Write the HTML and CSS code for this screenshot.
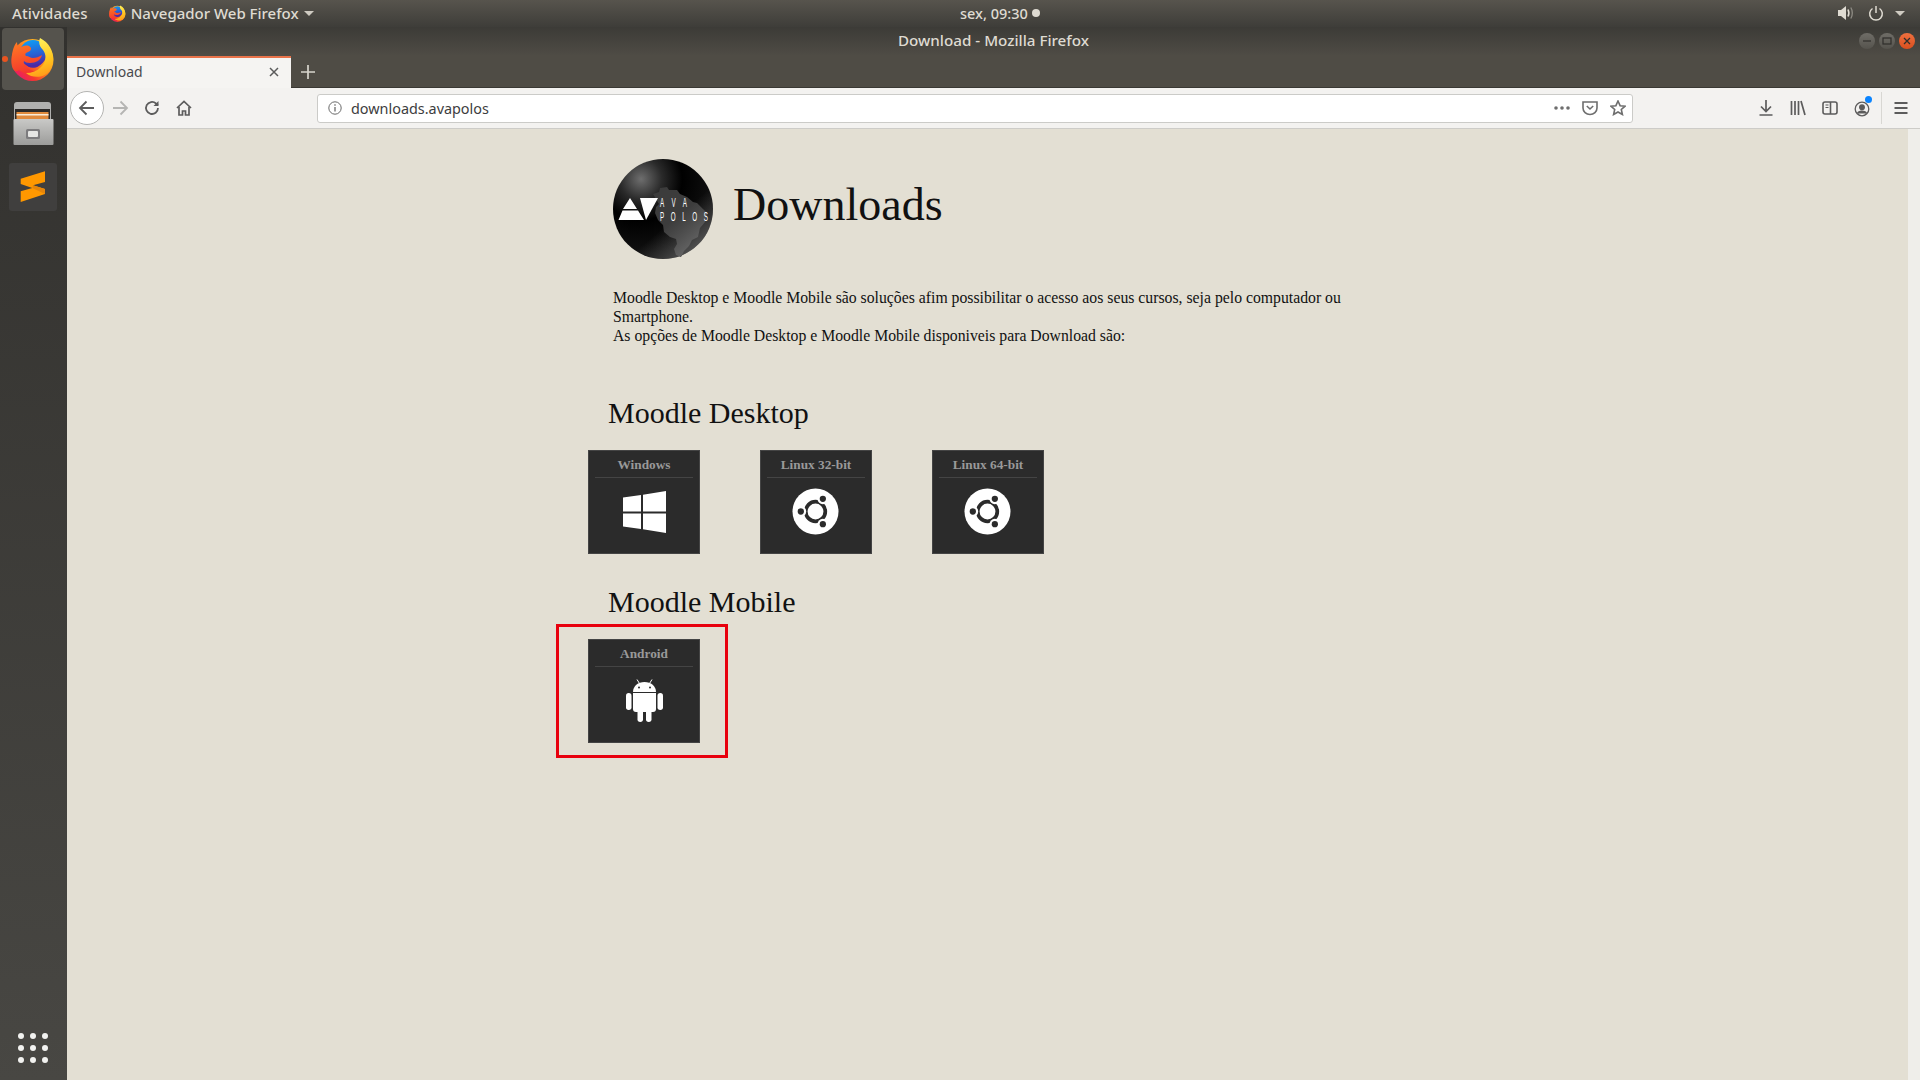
FILE: index.html
```html
<!DOCTYPE html>
<html lang="pt-BR">
<head>
    <meta charset="UTF-8">
    <meta name="viewport" content="width=device-width, initial-scale=1.0">
    <title>Download</title>
    <link rel="stylesheet" href="styles.css">
</head>
<body>
    <svg class="defs" width="0" height="0" aria-hidden="true">
        <defs>
            <linearGradient id="ffBase" x1="0.9" y1="0.2" x2="0.1" y2="0.9">
                <stop offset="0" stop-color="#ffc928"/>
                <stop offset="0.4" stop-color="#ff8a1c"/>
                <stop offset="0.72" stop-color="#f5372f"/>
                <stop offset="1" stop-color="#e8186e"/>
            </linearGradient>
            <linearGradient id="ffGlobe" x1="0.4" y1="0" x2="0.6" y2="1">
                <stop offset="0" stop-color="#0f9cf5"/>
                <stop offset="0.55" stop-color="#2a5fd2"/>
                <stop offset="1" stop-color="#54209c"/>
            </linearGradient>
            <linearGradient id="ffFlame" x1="0.4" y1="0" x2="0.6" y2="1">
                <stop offset="0" stop-color="#fff35e"/>
                <stop offset="0.6" stop-color="#ffc61f"/>
                <stop offset="1" stop-color="#ff9a1a"/>
            </linearGradient>
            <linearGradient id="ffHead" x1="0.2" y1="0" x2="0.5" y2="1">
                <stop offset="0" stop-color="#ff7a22"/>
                <stop offset="1" stop-color="#f4342e"/>
            </linearGradient>
            <symbol id="firefox" viewBox="0 0 44 44">
                <circle cx="21.500" cy="23" r="21" fill="url(#ffBase)"/>
                <circle cx="22" cy="16.500" r="13.500" fill="url(#ffGlobe)"/>
                <path d="M.5 23C1 14 3 8 6 5c0 3 1 5 3 6 2-2 6-3 9-2 2 1 3 3 1 5l-4 2c-1 1-1 2 0 3 3 0 4 2 7 2 3 0 6-1 9-3-1 5-6 8-12 8-3 0-5-1-6-2-1 3 1 6 5 8 3 2 7 3 11 2-6 4-15 4-21-1C3 37 0 30 .5 23z" fill="url(#ffHead)"/>
                <path d="M14 26c5 4 12 3 17-1-2 6-13 9-17 1z" fill="#4a2aa8"/>
                <path d="M29 1c-2 5 0 9 3 12 4 5 3 13-2 17-4 4-9 6-15 6 7 6 19 5 24-3C45 24 43 8 29 1z" fill="url(#ffFlame)"/>
            </symbol>
            <linearGradient id="fileBody" x1="0" y1="0" x2="0" y2="1">
                <stop offset="0" stop-color="#c9c9c7"/>
                <stop offset="1" stop-color="#9c9c9a"/>
            </linearGradient>
            <radialGradient id="logoShine" cx="0.28" cy="0.2" r="0.75">
                <stop offset="0" stop-color="#6e6e6e"/>
                <stop offset="0.28" stop-color="#2a2a2a"/>
                <stop offset="0.55" stop-color="#000"/>
                <stop offset="1" stop-color="#111"/>
            </radialGradient>
            <linearGradient id="logoEdge" x1="0.3" y1="0.3" x2="0.85" y2="0.95">
                <stop offset="0.5" stop-color="#888" stop-opacity="0"/>
                <stop offset="1" stop-color="#999" stop-opacity="0.55"/>
            </linearGradient>
            <symbol id="ubuntu" viewBox="0 0 48 48">
                <circle cx="24" cy="24" r="23.500" fill="#fff"/>
                <circle cx="24" cy="24" r="10" fill="none" stroke="#2b2b2b" stroke-width="3.800"/>
                <g fill="#fff">
                    <circle cx="9" cy="24" r="5.500"/>
                    <circle cx="31.500" cy="11" r="5.500"/>
                    <circle cx="31.500" cy="37" r="5.500"/>
                </g>
                <g fill="#2b2b2b">
                    <circle cx="9" cy="24" r="3.200"/>
                    <circle cx="31.500" cy="11" r="3.200"/>
                    <circle cx="31.500" cy="37" r="3.200"/>
                </g>
            </symbol>
        </defs>
    </svg>

    <header class="topbar">
        <div class="topbar-left">
            <span class="activities">Atividades</span>
            <span class="app-menu">
                <svg class="app-icon"><use href="#firefox"/></svg>
                Navegador Web Firefox
                <i class="caret"></i>
            </span>
        </div>
        <div class="clock">sex, 09:30 <i class="clock-dot"></i></div>
        <div class="tray">
            <svg class="speaker" width="16" height="16" viewBox="0 0 16 16">
                <path d="M0 5h3l5-4v14l-5-4H0z" fill="#dfdbd2"/>
                <path d="M10 4.500c1 2 1 5 0 7" fill="none" stroke="#dfdbd2" stroke-width="1.600"/>
                <path d="M12.800 2.500c2 3 2 8 0 11" fill="none" stroke="#8f8c85" stroke-width="1.300"/>
            </svg>
            <svg width="16" height="16" viewBox="0 0 16 16" fill="none" stroke="#dfdbd2" stroke-width="1.500">
                <path d="M4.500 3.500a6.300 6.300 0 1 0 7 0"/>
                <path d="M8 1v7"/>
            </svg>
            <i class="caret"></i>
        </div>
    </header>

    <div class="desktop">
        <nav class="dock">
            <div class="dock-item is-active">
                <i class="run-dot"></i>
                <svg width="44" height="44"><use href="#firefox"/></svg>
            </div>
            <div class="dock-item">
                <svg width="42" height="43" viewBox="0 0 42 43">
                    <path d="M2 3q0-3 3-3h31q3 0 3 3v16H2z" fill="#b0b0ae"/>
                    <rect x="3" y="7" width="35" height="11" fill="#2c2a28"/>
                    <rect x="4.500" y="10" width="32" height="8" fill="#e08a3c"/>
                    <rect x="4.500" y="12" width="32" height="1.500" fill="#f9ecd8"/>
                    <rect x="1.500" y="17" width="40" height="26" rx="1" fill="url(#fileBody)"/>
                    <rect x="14" y="27" width="14" height="10" rx="1.500" fill="#7d7c7e"/>
                    <rect x="16" y="29" width="10" height="6" rx="1" fill="#e6e6e4"/>
                </svg>
            </div>
            <div class="dock-item">
                <div class="sublime-tile">
                    <svg width="48" height="48" viewBox="0 0 48 48">
                        <path d="M11.700 15.700L36 8.300V19l-12 3.300L36 26v5l-24.300 8V28.300L23.300 25l-11.600-4z" fill="#ff9800"/>
                        <path d="M23.300 25l.7-2.700L36 26v5z" fill="#e5850b"/>
                    </svg>
                </div>
            </div>
            <div class="app-grid">
                <i></i><i></i><i></i><i></i><i></i><i></i><i></i><i></i><i></i>
            </div>
        </nav>

        <div class="window">
            <div class="titlebar">
                <span>Download - Mozilla Firefox</span>
                <div class="win-buttons">
                    <i class="win-btn"><svg width="16" height="16" viewBox="0 0 16 16"><path d="M4 8h8" stroke="#2f2e2b" stroke-width="1.200"/></svg></i>
                    <i class="win-btn"><svg width="16" height="16" viewBox="0 0 16 16"><rect x="4" y="5" width="8" height="6" fill="none" stroke="#2f2e2b" stroke-width="1.200"/></svg></i>
                    <i class="win-btn win-close"><svg width="16" height="16" viewBox="0 0 16 16"><path d="M5 5l6 6M11 5l-6 6" stroke="#2f2e2b" stroke-width="1.300"/></svg></i>
                </div>
            </div>

            <div class="tabstrip">
                <div class="tab">
                    <span>Download</span>
                    <svg width="12" height="12" viewBox="0 0 12 12"><path d="M2 2l8 8M10 2l-8 8" stroke="#5b5b5b" stroke-width="1.500"/></svg>
                </div>
                <svg class="new-tab" width="14" height="14" viewBox="0 0 14 14"><path d="M7 0v14M0 7h14" stroke="#d8d5cd" stroke-width="1.700"/></svg>
            </div>

            <div class="toolbar">
                <div class="nav-buttons">
                    <div class="back-btn">
                        <svg width="18" height="18" viewBox="0 0 18 18" fill="none" stroke="#5c5c5c" stroke-width="1.800"><path d="M16 9H2M8.500 2.500L2 9l6.500 6.500"/></svg>
                    </div>
                    <svg class="fwd" width="18" height="18" viewBox="0 0 18 18" fill="none" stroke="#b5b5b3" stroke-width="1.800"><path d="M2 9h14M9.500 2.500L16 9l-6.500 6.500"/></svg>
                    <svg class="reload" width="16" height="16" viewBox="0 0 16 16" fill="none" stroke="#5c5c5c" stroke-width="1.800"><path d="M14 8a6 6 0 1 1-2-4.500L14 5"/><path d="M14.500 1v5h-5" stroke="none" fill="#5c5c5c"/></svg>
                    <svg class="home" width="16" height="16" viewBox="0 0 16 16" fill="none" stroke="#5c5c5c" stroke-width="1.700"><path d="M1 8l7-6.500L15 8"/><path d="M3 7v8h3.500v-4h3v4H13V7"/></svg>
                </div>

                <div class="urlbar">
                    <svg width="14" height="14" viewBox="0 0 14 14" fill="none" stroke="#6a6a6a"><circle cx="7" cy="7" r="6.200"/><path d="M7 6v4.500M7 3.200v1.500" stroke-width="1.300"/></svg>
                    <span class="url">downloads.avapolos</span>
                    <div class="url-actions">
                        <svg width="16" height="4" viewBox="0 0 16 4" fill="#6e6e6e"><circle cx="2" cy="2" r="1.800"/><circle cx="8" cy="2" r="1.800"/><circle cx="14" cy="2" r="1.800"/></svg>
                        <svg width="16" height="16" viewBox="0 0 16 16" fill="none" stroke="#6e6e6e" stroke-width="1.600"><path d="M1 2h14v6a7 6.500 0 0 1-14 0z"/><path d="M4.800 6L8 9l3.200-3"/></svg>
                        <svg width="16" height="16" viewBox="0 0 16 16" fill="none" stroke="#6e6e6e" stroke-width="1.600"><path d="M8 1l2.100 4.700 5 .5-3.800 3.300 1.100 5L8 12l-4.400 2.500 1.100-5L.9 6.200l5-.5z"/></svg>
                    </div>
                </div>

                <div class="tools">
                    <svg width="16" height="16" viewBox="0 0 16 16" fill="none" stroke="#5c5c5c" stroke-width="1.700"><path d="M8 0v11M3 6.500L8 11.500l5-5M1.500 15h13"/></svg>
                    <svg width="16" height="16" viewBox="0 0 16 16" fill="none" stroke="#5c5c5c" stroke-width="1.700"><path d="M1.500 1v14M5 1v14M8.500 1v14M11 1l4 14"/></svg>
                    <svg width="16" height="16" viewBox="0 0 16 16" fill="none" stroke="#5c5c5c" stroke-width="1.600"><rect x="1" y="2" width="14" height="12" rx="2"/><path d="M8.500 2v12"/><path d="M3.500 5h3M3.500 7.500h3" stroke-width="1.200"/></svg>
                    <div class="account">
                        <svg width="16" height="16" viewBox="0 0 16 16" fill="none" stroke="#5c5c5c" stroke-width="1.300"><circle cx="8" cy="8" r="6.800"/><circle cx="8" cy="6.300" r="2.300" fill="#5c5c5c"/><path d="M3.500 12.500c1-3 8-3 9 0" fill="#5c5c5c"/></svg>
                        <i class="account-dot"></i>
                    </div>
                    <i class="tool-sep"></i>
                    <svg width="16" height="16" viewBox="0 0 16 16" stroke="#5c5c5c" stroke-width="1.800"><path d="M1.500 3h13M1.500 8h13M1.500 13h13"/></svg>
                </div>
            </div>

            <div class="viewport">
                <main class="page">
                    <div class="page-head">
                        <svg class="logo" width="100" height="100" viewBox="0 0 100 100">
                            <circle cx="50" cy="50" r="50" fill="url(#logoShine)"/>
                            <path d="M40 35l6-2 1-4 7-1 2 3 8 0 3 4 7 3 6 5 4 1 6 6 4 4-2 9-5 6-2 9-6 3-3 6-5 5-3 6-5-2-2-6 3-5-1-5-6-2-6-5-1-7-5-5-3-7 1-6 3-3z" fill="#3c3c3c"/>
                            <circle cx="50" cy="50" r="50" fill="url(#logoEdge)"/>
                            <path d="M17 39l7 11H10zM9.500 51.500h15.500L31 61H5.500z" fill="#fff"/>
                            <path d="M27 39h18L33 61z" fill="#fff"/>
                            <text class="logo-text" transform="scale(.5 1)" x="94" y="48" textLength="54" lengthAdjust="spacing">AVA</text>
                            <text class="logo-text" transform="scale(.5 1)" x="94" y="62.400" textLength="96" lengthAdjust="spacing">POLOS</text>
                        </svg>
                        <h1>Downloads</h1>
                    </div>

                    <p class="intro">
                        Moodle Desktop e Moodle Mobile são soluções afim possibilitar o acesso aos seus cursos, seja pelo computador ou Smartphone.<br>
                        As opções de Moodle Desktop e Moodle Mobile disponiveis para Download são:
                    </p>

                    <h2>Moodle Desktop</h2>
                    <div class="cards">
                        <a class="card">
                            <span class="card-title">Windows</span>
                            <span class="card-icon">
                                <svg width="43" height="42" viewBox="0 0 43 42" fill="#fff">
                                    <path d="M0 6.500L18 4v16.500H0zM20 3.700L43 0v20.500H20zM0 22.500h18V38L0 35.500zM20 22.500h23V42l-23-3.700z"/>
                                </svg>
                            </span>
                        </a>
                        <a class="card">
                            <span class="card-title">Linux 32-bit</span>
                            <span class="card-icon"><svg class="ubuntu-icon" width="47" height="47"><use href="#ubuntu"/></svg></span>
                        </a>
                        <a class="card">
                            <span class="card-title">Linux 64-bit</span>
                            <span class="card-icon"><svg class="ubuntu-icon" width="47" height="47"><use href="#ubuntu"/></svg></span>
                        </a>
                    </div>

                    <h2>Moodle Mobile</h2>
                    <div class="cards">
                        <a class="card is-marked">
                            <span class="card-title">Android</span>
                            <span class="card-icon">
                                <svg width="37" height="43" viewBox="0 0 37 43" fill="#fff">
                                    <path d="M11 .500l2.500 4M26 .500l-2.500 4" stroke="#fff" stroke-width="1"/>
                                    <path d="M7 13C7 7 12 3 18.500 3S30 7 30 13z"/>
                                    <circle cx="13" cy="8.500" r="1" fill="#2b2b2b"/>
                                    <circle cx="24" cy="8.500" r="1" fill="#2b2b2b"/>
                                    <path d="M7 14h23V30q0 3-3 3H10q-3 0-3-3z"/>
                                    <rect x="0" y="14" width="5.500" height="17" rx="2.700"/>
                                    <rect x="31.500" y="14" width="5.500" height="17" rx="2.700"/>
                                    <rect x="11.500" y="30" width="5.500" height="13" rx="2.700"/>
                                    <rect x="20" y="30" width="5.500" height="13" rx="2.700"/>
                                </svg>
                            </span>
                        </a>
                    </div>
                </main>
                <div class="scrollbar"></div>
            </div>
        </div>
    </div>
</body>
</html>
```

FILE: styles.css
```css
* {
    box-sizing: border-box;
}
html, body {
    margin: 0;
    height: 100%;
    overflow: hidden;
}
body {
    display: flex;
    flex-direction: column;
    height: 1080px;
    font-family: "Noto Sans", sans-serif;
    background: #3c3b37;
}
i {
    display: block;
}
.defs {
    position: absolute;
}

/* gnome top bar */
.topbar {
    display: flex;
    justify-content: space-between;
    align-items: center;
    position: relative;
    height: 27px;
    padding: 0 15px 1px 12px;
    background: linear-gradient(#57544d, #3e3d39);
    color: #dfdbd2;
    font-size: 15px;
    font-weight: 500;
}
.topbar-left {
    display: flex;
    align-items: center;
    gap: 21px;
}
.activities {
    letter-spacing: 0.1px;
}
.app-menu {
    display: flex;
    align-items: center;
    gap: 5px;
}
.app-icon {
    width: 17px;
    height: 17px;
}
.caret {
    width: 0;
    height: 0;
    border-left: 5px solid transparent;
    border-right: 5px solid transparent;
    border-top: 5px solid #cfcbc2;
}
.clock {
    display: flex;
    align-items: center;
    gap: 4px;
    position: absolute;
    left: 960px;
    font-size: 14.500px;
}
.clock-dot {
    width: 8px;
    height: 8px;
    border-radius: 50%;
    background: #dfdbd2;
}
.tray {
    display: flex;
    align-items: center;
    gap: 11px;
}
.speaker {
    margin-right: 3px;
}

.desktop {
    display: flex;
    flex: 1;
    min-height: 0;
}

/* left dock */
.dock {
    display: flex;
    flex-direction: column;
    align-items: center;
    gap: 2px;
    width: 67px;
    padding: 1px 1px 0 0;
    background: linear-gradient(#32312e, #484743);
}
.dock-item {
    display: flex;
    align-items: center;
    justify-content: center;
    position: relative;
    width: 62px;
    height: 62px;
    border-radius: 4px;
}
.dock-item.is-active {
    background: #55534d;
}
.run-dot {
    position: absolute;
    left: 0;
    top: 28px;
    width: 6px;
    height: 6px;
    border-radius: 50%;
    background: #e95420;
}
.sublime-tile {
    width: 48px;
    height: 48px;
    border-radius: 3px;
    background: #403f3e;
}
.app-grid {
    display: grid;
    grid-template-columns: repeat(3, 6px);
    gap: 6px;
    margin-top: auto;
    margin-bottom: 17px;
}
.app-grid i {
    width: 6px;
    height: 6px;
    border-radius: 50%;
    background: #f2f2f0;
}

/* browser window */
.window {
    display: flex;
    flex: 1;
    flex-direction: column;
    min-width: 0;
}
.titlebar {
    display: flex;
    align-items: center;
    justify-content: center;
    position: relative;
    height: 29px;
    padding-bottom: 3px;
    background: linear-gradient(#3c3b37, #4f4c45);
    color: #dfdbd2;
    font-size: 15.200px;
    font-weight: 500;
}
.win-buttons {
    display: flex;
    gap: 4px;
    position: absolute;
    right: 5px;
    top: 6px;
}
.win-btn {
    display: flex;
    width: 16px;
    height: 16px;
    border-radius: 50%;
    background: linear-gradient(#6f6d67, #55534d);
}
.win-close {
    background: linear-gradient(#f0703f, #d94f1e);
}

.tabstrip {
    display: flex;
    align-items: center;
    height: 32px;
    background: #4f4c45;
    box-shadow: inset 0 -1px 0 #3a3833;
}
.tab {
    display: flex;
    align-items: center;
    justify-content: space-between;
    width: 224px;
    height: 32px;
    padding: 0 11px 3px 9px;
    border-top: 2px solid #e9734a;
    background: #f5f4f2;
    color: #4a4a4f;
    font-size: 14px;
}
.new-tab {
    margin-left: 10px;
}

.toolbar {
    display: flex;
    align-items: center;
    height: 41px;
    padding: 0 11px 0 3px;
    border-bottom: 1px solid #cdccc8;
    background: #f3f2f0;
}
.nav-buttons {
    display: flex;
    align-items: center;
    width: 247px;
}
.back-btn {
    display: flex;
    align-items: center;
    justify-content: center;
    width: 34px;
    height: 34px;
    border: 1px solid #b4b4b2;
    border-radius: 50%;
    background: #fff;
}
.fwd {
    margin-left: 7px;
}
.reload {
    margin-left: 15px;
}
.home {
    margin-left: 16px;
}
.urlbar {
    display: flex;
    align-items: center;
    width: 1316px;
    height: 29px;
    padding: 0 6px 0 10px;
    border: 1px solid #cbcbc8;
    border-radius: 3px;
    background: #fff;
}
.url {
    margin-left: 9px;
    color: #3d3d40;
    font-size: 14.400px;
}
.url-actions {
    display: flex;
    align-items: center;
    gap: 12px;
    margin-left: auto;
}
.tools {
    display: flex;
    align-items: center;
    gap: 16px;
    margin-left: auto;
}
.account {
    position: relative;
    height: 16px;
}
.account-dot {
    position: absolute;
    right: -2px;
    top: -4px;
    width: 7px;
    height: 7px;
    border-radius: 50%;
    background: #0a84ff;
}
.tool-sep {
    width: 1px;
    height: 32px;
    margin: 0 -5px;
    background: #d8d7d3;
}

/* page */
.viewport {
    display: flex;
    flex: 1;
    min-height: 0;
    background: #e3dfd3;
}
.page {
    flex: 1;
    padding: 30px 0 0 521px;
    color: #111;
    font-family: "Liberation Serif", serif;
}
.page-head {
    display: flex;
    gap: 20px;
    padding-left: 25px;
}
.logo {
    flex: none;
}
.logo-text {
    fill: #fff;
    font-family: "Liberation Sans", sans-serif;
    font-size: 12.500px;
}
h1 {
    margin: 18px 0 0;
    font-size: 46px;
    font-weight: 400;
    line-height: 1.2;
}
.intro {
    width: 785px;
    margin: 29px 0 0;
    padding-left: 25px;
    font-size: 15.750px;
    line-height: 19px;
}
h2 {
    margin: 51px 0 20px;
    padding-left: 20px;
    font-size: 30px;
    font-weight: 400;
    line-height: 34px;
}
.cards {
    display: flex;
    gap: 60px;
}
.cards + h2 {
    margin-top: 31px;
}
.card {
    display: flex;
    flex-direction: column;
    position: relative;
    width: 112px;
    height: 104px;
    padding: 0 6px;
    border: 1px solid #444;
    background: #2b2b2b;
}
.card-title {
    height: 27px;
    border-bottom: 1px solid #444;
    color: #999;
    font-size: 13.300px;
    font-weight: 700;
    line-height: 27px;
    text-align: center;
}
.card-icon {
    display: flex;
    flex: 1;
    align-items: center;
    justify-content: center;
    padding-bottom: 8px;
}
.ubuntu-icon {
    margin-right: 2px;
}
/* red mark the screenshot author drew round the android card */
.is-marked::after {
    content: "";
    box-sizing: border-box;
    position: absolute;
    left: -33px;
    top: -16px;
    width: 172px;
    height: 134px;
    border: 3px solid #e8000d;
}
.scrollbar {
    width: 12px;
    background: #efeeea;
}
```
